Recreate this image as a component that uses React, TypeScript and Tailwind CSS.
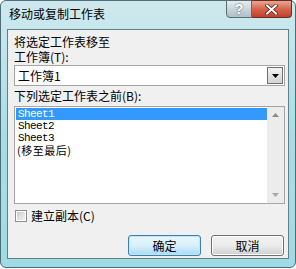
import React from "react";

const cjk = { fontFamily: '"Noto Sans CJK SC", "Liberation Sans", sans-serif' };
const mono = { fontFamily: '"Liberation Mono", "DejaVu Sans Mono", monospace' };

function Btn({ label, primary }: { label: string; primary?: boolean }) {
  return (
    <div
      className={
        "w-[73px] h-[21px] rounded-[3px] border flex items-center justify-center text-[12px] leading-[14px] text-black " +
        (primary
          ? "border-[#3c7fb1] bg-gradient-to-b from-[#eaf6fd] via-[#d9f0fc] to-[#a7d9f5] shadow-[inset_0_0_0_1px_#bfe6f9]"
          : "border-[#707070] bg-gradient-to-b from-[#f2f2f2] via-[#ebebeb] to-[#cfcfcf] shadow-[inset_0_0_0_1px_#fcfcfc]")
      }
      style={cjk}
    >
      {label}
    </div>
  );
}

export default function App() {
  return (
    <div className="w-[296px] h-[269px] bg-white">
      <div className="w-[296px] h-[268px] rounded-[6px] border border-[#4b6e78] bg-gradient-to-b from-[#cfe9ee] via-[#a9dde6] to-[#9fdbe4] flex flex-col">
        <div className="h-[28px] flex justify-between items-start">
          <div className="pl-[8px] pt-[5px] text-[12px] leading-[15px] text-black" style={cjk}>
            移动或复制工作表
          </div>
          <div className="flex mr-[3px] -mt-[1px]">
            <div className="w-[26px] h-[18px] rounded-bl-[4px] border border-[#5a6c74] bg-gradient-to-b from-[#e6eef1] via-[#c8d6dc] to-[#aebfc6] flex items-center justify-center text-[14px] leading-[16px] font-bold text-white [text-shadow:0_0_2px_#3a4a50]" style={{ fontFamily: '"Liberation Sans", sans-serif' }}>
              ?
            </div>
            <div className="w-[40px] h-[18px] rounded-br-[4px] border border-l-0 border-[#6b2a20] bg-gradient-to-b from-[#e9a696] via-[#d4644c] to-[#c2402a] flex items-center justify-center">
              <svg width="13" height="11" viewBox="0 0 13 11">
                <path d="M2 1.5 L11 9.5 M11 1.5 L2 9.5" stroke="#4a1a12" strokeWidth="3.4" strokeLinecap="square" />
                <path d="M2 1.5 L11 9.5 M11 1.5 L2 9.5" stroke="#ffffff" strokeWidth="2" strokeLinecap="square" />
              </svg>
            </div>
          </div>
        </div>
        <div className="ml-[6px] mr-[6px] h-[230px] border border-[#5d7f88] bg-[#f0f0f0] flex flex-col pl-[6px] pr-[3px] text-[12px] text-black" style={cjk}>
          <div className="mt-[4px] leading-[15px]">将选定工作表移至</div>
          <div className="leading-[15px]">工作簿(T):</div>
          <div className="mt-[1px] h-[21px] border border-[#a5a5a5] bg-white flex items-center justify-between">
            <div className="pl-[3px] leading-[15px]">工作簿1</div>
            <div className="w-[16px] h-[17px] mr-[1px] border border-[#707070] bg-gradient-to-b from-[#f2f2f2] to-[#d4d4d4] flex items-center justify-center">
              <svg width="7" height="4" viewBox="0 0 7 4"><path d="M0 0 H7 L3.5 4 Z" fill="#000" /></svg>
            </div>
          </div>
          <div className="mt-[2px] leading-[15px]">下列选定工作表之前(B):</div>
          <div className="mt-[3px] h-[98px] border border-[#a5a5a5] bg-white flex">
            <div className="flex-1 pt-[1px] pl-[1px]">
              <div className="h-[12px] leading-[12px] bg-[#3399ff] text-white flex items-center pl-[2px] text-[11px] tracking-[-0.6px]" style={mono}>Sheet1</div>
              <div className="h-[12px] leading-[12px] flex items-center pl-[2px] text-[11px] tracking-[-0.6px]" style={mono}>Sheet2</div>
              <div className="h-[12px] leading-[12px] flex items-center pl-[2px] text-[11px] tracking-[-0.6px]" style={mono}>Sheet3</div>
              <div className="h-[12px] leading-[12px] flex items-center pl-[1px] text-[11px] tracking-[0.5px]" style={cjk}>(移至最后)</div>
            </div>
            <div className="w-[17px] bg-[#ececec] flex flex-col justify-between items-center py-[6px]">
              <svg width="7" height="4" viewBox="0 0 7 4"><path d="M0 4 H7 L3.5 0 Z" fill="#8a8a8a" /></svg>
              <svg width="7" height="4" viewBox="0 0 7 4"><path d="M0 0 H7 L3.5 4 Z" fill="#a8a8a8" /></svg>
            </div>
          </div>
          <div className="mt-[5px] flex items-center h-[14px]">
            <div className="w-[12px] h-[12px] ml-[1px] border border-[#8e8f8f] bg-white p-[1px]">
              <div className="w-full h-full bg-gradient-to-br from-[#cbcbcb] to-[#f4f4f4]" />
            </div>
            <div className="ml-[4px] leading-[14px]">建立副本(C)</div>
          </div>
          <div className="mt-[12px] flex justify-end gap-[10px] pr-[1px]">
            <Btn label="确定" primary />
            <Btn label="取消" />
          </div>
        </div>
      </div>
    </div>
  );
}
